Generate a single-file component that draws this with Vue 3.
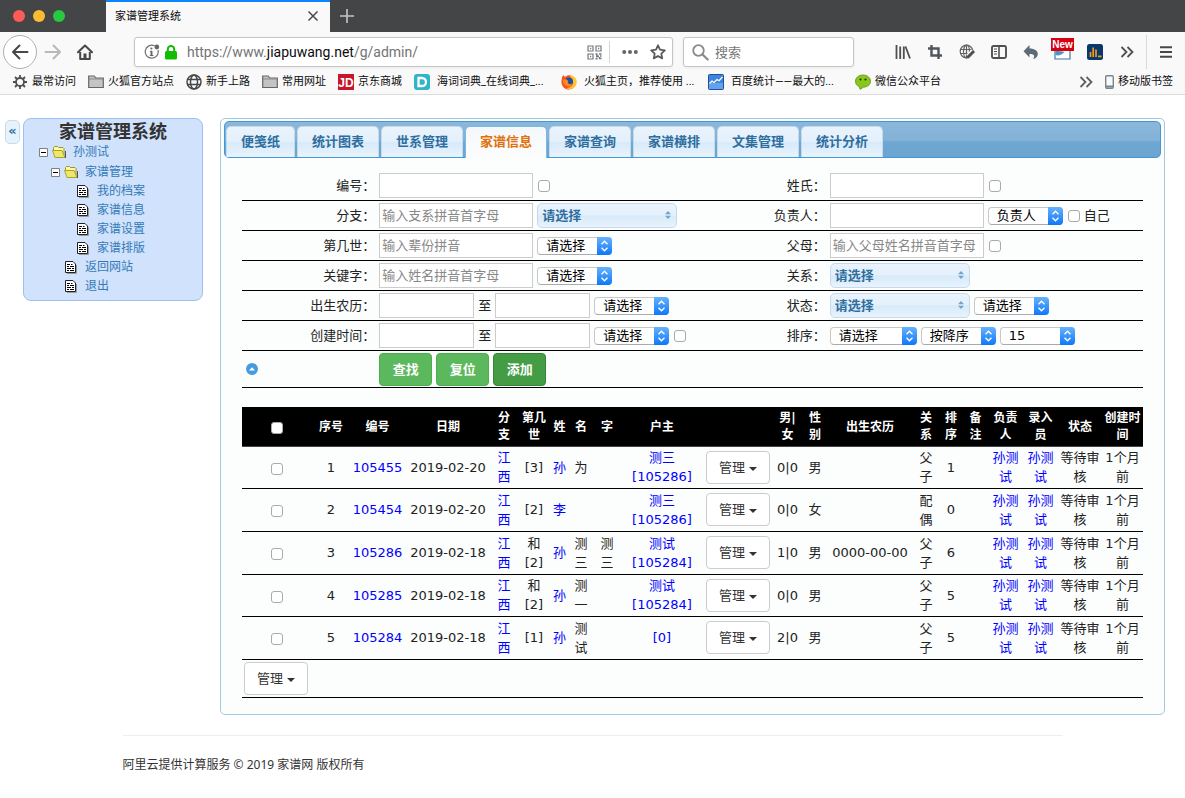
<script setup>
const bookmarks = [
  { icon: 'gear', text: '最常访问' },
  { icon: 'folder', text: '火狐官方站点' },
  { icon: 'globe', text: '新手上路' },
  { icon: 'folder', text: '常用网址' },
  { icon: 'jd', text: '京东商城' },
  { icon: 'dict', text: '海词词典_在线词典_...', wide: true },
  { icon: 'firefox', text: '火狐主页，推荐使用 ...', wide: true },
  { icon: 'stats', text: '百度统计——最大的...', wide: true },
  { icon: 'wechat', text: '微信公众平台' }
]

const tree = [
  { text: '孙测试', kind: 'folder', level: 0 },
  { text: '家谱管理', kind: 'folder', level: 1 },
  { text: '我的档案', kind: 'leaf', level: 3 },
  { text: '家谱信息', kind: 'leaf', level: 3 },
  { text: '家谱设置', kind: 'leaf', level: 3 },
  { text: '家谱排版', kind: 'leaf', level: 3 },
  { text: '返回网站', kind: 'leaf', level: 2 },
  { text: '退出', kind: 'leaf', level: 2 }
]

const tabs = ['便笺纸', '统计图表', '世系管理', '家谱信息', '家谱查询', '家谱横排', '文集管理', '统计分析']

const text = (w = 154, ph = '') => ({ t: 'text', w, ph })
const check = { t: 'check' }
const menu = { t: 'menu', w: 140, value: '请选择' }
const pick = (value = '请选择', w = 75) => ({ t: 'pick', w, value })
const word = value => ({ t: 'word', value })

const fields = [
  { label: '编号', items: [text(), check] },
  { label: '姓氏', items: [text(), check] },
  { label: '分支', items: [text(154, '输入支系拼音首字母'), menu] },
  { label: '负责人', items: [text(), pick('负责人'), check, word('自己')] },
  { label: '第几世', items: [text(154, '输入辈份拼音'), pick()] },
  { label: '父母', items: [text(154, '输入父母姓名拼音首字母'), check] },
  { label: '关键字', items: [text(154, '输入姓名拼音首字母'), pick()] },
  { label: '关系', items: [menu] },
  { label: '出生农历', items: [text(95), word('至'), text(95), pick()] },
  { label: '状态', items: [menu, pick()] },
  { label: '创建时间', items: [text(95), word('至'), text(95), pick(), check] },
  { label: '排序', items: [pick('请选择', 87), pick('按降序'), pick('15')] }
]

const columns = [
  ['', 70], ['序号', 38], ['编号', 55], ['日期', 86], ['分支', 26], ['第几世', 34], ['姓', 17],
  ['名', 26], ['字', 26], ['户主', 84], ['', 68], ['男|女', 31], ['性别', 24], ['出生农历', 86],
  ['关系', 26], ['排序', 24], ['备注', 25], ['负责人', 35], ['录入员', 35], ['状态', 44], ['创建时间', 41]
]

const people = [
  { n: 1, id: '105455', date: '2019-02-20', gen: '[3]', sur: '孙', name: '为', zi: '', head: '测三', hid: '[105286]', mf: '0|0', sex: '男', born: '', rel: '父子', sort: 1 },
  { n: 2, id: '105454', date: '2019-02-20', gen: '[2]', sur: '李', name: '', zi: '', head: '测三', hid: '[105286]', mf: '0|0', sex: '女', born: '', rel: '配偶', sort: 0 },
  { n: 3, id: '105286', date: '2019-02-18', gen: '和 [2]', sur: '孙', name: '测三', zi: '测三', head: '测试', hid: '[105284]', mf: '1|0', sex: '男', born: '0000-00-00', rel: '父子', sort: 6 },
  { n: 4, id: '105285', date: '2019-02-18', gen: '和 [2]', sur: '孙', name: '测一', zi: '', head: '测试', hid: '[105284]', mf: '0|0', sex: '男', born: '', rel: '父子', sort: 5 },
  { n: 5, id: '105284', date: '2019-02-18', gen: '[1]', sur: '孙', name: '测试', zi: '', head: '', hid: '[0]', mf: '2|0', sex: '男', born: '', rel: '父子', sort: 5 }
]
</script>

<template>
  <div class="window">
    <header class="chrome">
      <div class="titlebar">
        <div class="lights"><i class="red"></i><i class="yellow"></i><i class="green"></i></div>
        <div class="browser-tab">
          <span>家谱管理系统</span>
          <button class="plain" aria-label="关闭标签页">
            <svg width="12" height="12" viewBox="0 0 12 12"><path d="M1.5 1.5l9 9M10.5 1.5l-9 9" stroke="#4a4a4a" stroke-width="1.5" /></svg>
          </button>
        </div>
        <button class="plain new-tab" aria-label="新标签页">
          <svg width="14" height="14" viewBox="0 0 14 14"><path d="M7 0v14M0 7h14" stroke="#c6c6c7" stroke-width="1.6" /></svg>
        </button>
      </div>

      <div class="toolbar">
        <button class="back" aria-label="后退">
          <svg width="18" height="16" viewBox="0 0 18 16"><path d="M16.5 8H2M8.5 1.500L2 8l6.500 6.500" fill="none" stroke="#484848" stroke-width="2" stroke-linecap="round" stroke-linejoin="round" /></svg>
        </button>
        <button class="plain tool" aria-label="前进">
          <svg width="18" height="16" viewBox="0 0 18 16"><path d="M1.500 8H16M9.500 1.500L16 8l-6.500 6.500" fill="none" stroke="#b9b9b9" stroke-width="2" stroke-linecap="round" stroke-linejoin="round" /></svg>
        </button>
        <button class="plain tool" aria-label="主页">
          <svg width="16" height="16" viewBox="0 0 16 16"><path d="M1 8.300L8 1.500l7 6.800" fill="none" stroke="#484848" stroke-width="2" stroke-linecap="round" stroke-linejoin="round" /><path d="M3.200 8v7h9.600V8" fill="none" stroke="#484848" stroke-width="2" stroke-linejoin="round" /><path d="M6.500 9.500h3V15h-3z" fill="#484848" /></svg>
        </button>
        <div class="urlbar">
          <svg width="16" height="16" viewBox="0 0 16 16"><path d="M10.500 1.800A6.500 6.500 0 1 0 14 6" fill="none" stroke="#717171" stroke-width="1.200" /><path d="M7.500 7v4.500" fill="none" stroke="#666" stroke-width="1.900" /><path d="M6 7.300h2M5.800 11.500h3.600" stroke="#666" stroke-width="1" /><circle cx="7.400" cy="4.500" r="1.100" fill="#666" /><circle cx="12.800" cy="3" r="2.400" fill="#666" /></svg>
          <svg width="12" height="15" viewBox="0 0 12 15"><rect y="6" width="12" height="8.500" rx="1.500" fill="#12bc00" /><path d="M2.800 7V4.200a3.200 3.200 0 0 1 6.400 0V7" fill="none" stroke="#12bc00" stroke-width="2" /></svg>
          <span class="url">https://www.<b>jiapuwang.net</b>/g/admin/</span>
          <svg width="15" height="15" viewBox="0 0 15 15" fill="none" stroke="#73777f" stroke-width="1.200"><path d="M1 1h5v5H1zM9 1h5v5H9zM1 9h5v5H1z" /><path d="M3 3.500h1.200M11 3.500h1.200M3 11.500h1.200" stroke-width="1.600" /><path d="M8.500 9h2M12 9h2.500M9 11.200h3M13 11h1.500M8.500 13.800h2M12 13.600h2.500M10 9.500v3M12.500 12v2" stroke-width="1.500" /></svg>
          <i class="rule"></i>
          <svg width="16" height="6" viewBox="0 0 16 6" fill="#666"><circle cx="2.200" cy="3" r="2" /><circle cx="8" cy="3" r="2" /><circle cx="13.800" cy="3" r="2" /></svg>
          <svg width="16" height="16" viewBox="0 0 16 16"><path d="M8 1.300l2 4.400 4.800.600-3.500 3.300.900 4.800L8 12l-4.200 2.400.900-4.800L1.200 6.300 6 5.700z" fill="none" stroke="#5a5a5a" stroke-width="1.800" stroke-linejoin="round" /></svg>
        </div>
        <label class="search">
          <svg width="17" height="17" viewBox="0 0 17 17" fill="none" stroke="#8a8a8a"><circle cx="6.500" cy="6.500" r="5.300" stroke-width="1.800" /><path d="M10.500 10.500l5.200 5" stroke-width="2.200" stroke-linecap="round" /></svg>
          <input type="text" placeholder="搜索" aria-label="搜索" />
        </label>
        <div class="tools">
          <button class="plain tool" aria-label="书库"><svg width="16" height="16" viewBox="0 0 16 16" stroke="#505050" stroke-width="1.800"><path d="M1.500 1v14M5.200 2.500V15M8.800 2.500V15M10.500 2.500l4.500 12" /></svg></button>
          <button class="plain tool" aria-label="截图"><svg width="16" height="16" viewBox="0 0 16 16" fill="none" stroke="#4e555d" stroke-width="2.400"><path d="M4.500 1v10.500H15M1 4.500h10.500V15" /></svg></button>
          <button class="plain tool" aria-label="翻译"><svg width="17" height="16" viewBox="0 0 17 16" fill="none" stroke="#626262" stroke-width="1.200"><circle cx="7.500" cy="7.500" r="6.300" /><ellipse cx="7.500" cy="7.500" rx="3" ry="6.300" /><path d="M1.200 5.500h12.600M1.200 9.500h12.600M7.500 1v13" /><path d="M9 12.500l5.500-5.500" stroke="#f9f9fa" stroke-width="5" /><path d="M8.500 13.500l6.500-6.500" stroke="#505050" stroke-width="3" /></svg></button>
          <button class="plain tool" aria-label="侧栏"><svg width="16" height="14" viewBox="0 0 16 14" fill="none" stroke="#505050"><rect x="1" y="1" width="14" height="12" rx="1.500" stroke-width="1.900" /><path d="M8 1v12" stroke-width="1.600" /><path d="M3 4h3M3 6.500h3M3 9h3" stroke-width="1" /></svg></button>
          <button class="plain tool" aria-label="撤销"><svg width="16" height="16" viewBox="0 0 16 16"><path d="M6.500 1v3.400c5.200 0 8.800 2.400 8.300 6-.400 2.400-2.300 4-4.800 4.600 2.500-3 1-4.900-3.500-4.900v3.300L.5 7.200z" fill="#5c6b78" /></svg></button>
          <button class="plain tool badge" aria-label="消息"><svg width="18" height="16" viewBox="0 0 18 16"><path d="M1 2h15v13H1z" fill="#fff" stroke="#3f78a9" stroke-width="1.200" /><path d="M1.500 7c4 0 7 0 9 1-3 3-6 4-9 3z" fill="#4f93c6" /></svg><em>New</em></button>
          <button class="plain tool" aria-label="统计"><svg width="16" height="16" viewBox="0 0 16 16"><rect width="16" height="16" rx="2.500" fill="#07396d" /><path d="M3.500 13V8M6.200 13V3.500M9 13V5.500M11 12.300h3.500" stroke="#f29a1d" stroke-width="1.700" /></svg></button>
          <button class="plain tool" aria-label="更多工具"><svg width="14" height="12" viewBox="0 0 14 12"><path d="M1.500 1l5 5-5 5M7.500 1l5 5-5 5" fill="none" stroke="#505050" stroke-width="1.800" /></svg></button>
        </div>
        <i class="tall-rule"></i>
        <button class="plain tool" aria-label="菜单"><svg width="12" height="12" viewBox="0 0 12 12"><path d="M0 1.200h12M0 6h12M0 10.800h12" stroke="#484848" stroke-width="2" /></svg></button>
      </div>

      <nav class="bookmarks">
        <a v-for="b in bookmarks" :key="b.text" href="#" :class="{ wide: b.wide }">
          <svg v-if="b.icon === 'gear'" width="16" height="16" viewBox="0 0 16 16" fill="none" stroke="#505050"><circle cx="8" cy="8" r="4" stroke-width="1.800" /><path d="M8 1v3M8 12v3M1 8h3M12 8h3M3 3l2 2M11 11l2 2M13 3l-2 2M5 11l-2 2" stroke-width="1.800" /></svg>
          <svg v-else-if="b.icon === 'folder'" width="16" height="16" viewBox="0 0 16 16"><path d="M.7 13.500V2h5.500l1.500 2h7.600v9.500z" fill="#c4c4c4" stroke="#676767" stroke-width="1.200" /><path d="M1 5h14" stroke="#8a8a8a" /></svg>
          <svg v-else-if="b.icon === 'globe'" width="16" height="16" viewBox="0 0 16 16" fill="none" stroke="#474747" stroke-width="1.500"><circle cx="8" cy="8" r="7" /><ellipse cx="8" cy="8" rx="3.500" ry="7" /><path d="M1.500 5.500h13M1.500 10.500h13" /></svg>
          <svg v-else-if="b.icon === 'jd'" width="16" height="16" viewBox="0 0 16 16"><rect width="16" height="16" fill="#c8152a" /><text x="8" y="12.500" text-anchor="middle" font-family="Liberation Sans" font-size="12" font-weight="bold" fill="#fff">JD</text></svg>
          <svg v-else-if="b.icon === 'dict'" width="16" height="16" viewBox="0 0 16 16"><rect width="16" height="16" rx="3" fill="#2fb4c8" /><path d="M4.500 4h3.500a4 4 0 0 1 0 8H4.500z" fill="none" stroke="#fff" stroke-width="2.300" /></svg>
          <svg v-else-if="b.icon === 'firefox'" width="16" height="16" viewBox="0 0 16 16"><path d="M1 3c1-1 1-2 1-2l2 2c3-3 8-2 10 2 3 5-1 10.500-6 10.500S0 11 .5 7z" fill="#f5531f" /><path d="M9 1c6 1 8 6 6 10-2 4-7 5-10 3 4 0 7-2 7-6 0-3-3-3-3-7z" fill="#ffc52d" /><circle cx="8" cy="7.500" r="4" fill="#234ba8" /><path d="M2 6c2-1 4-1 5 1 1 1-1 1 0 2 1 2 4 1 4 0 0 3-3 4-5 3-3-1-4-3-4-6z" fill="#ff8a18" /></svg>
          <svg v-else-if="b.icon === 'stats'" width="16" height="16" viewBox="0 0 16 16"><rect x=".5" y=".5" width="15" height="15" rx="1" fill="#3e83dc" stroke="#1d4f9f" /><path d="M1 9h14v6H1z" fill="#64a2ea" /><path d="M1.500 9.500L4 7l2 1.500 3-3 2 1.200L14.500 3" fill="none" stroke="#fff" stroke-width="1.300" /></svg>
          <svg v-else width="16" height="16" viewBox="0 0 16 16"><path d="M8 1c4.500 0 7.500 2.800 7.500 6.300S12.500 13 8.500 13.200L5 15.300l-.800-2.700C1.500 11.500.5 9.500.5 7.300.5 3.800 3.500 1 8 1z" fill="#8ac71c" stroke="#5d8f0d" stroke-width=".800" /><circle cx="5.500" cy="5.500" r="1.100" fill="#20340a" /><circle cx="10.500" cy="5.500" r="1.100" fill="#20340a" /></svg>
          <span>{{ b.text }}</span>
        </a>
        <button class="plain overflow" aria-label="更多书签"><svg width="14" height="12" viewBox="0 0 14 12"><path d="M1.500 1l5 5-5 5M7.500 1l5 5-5 5" fill="none" stroke="#606060" stroke-width="1.800" /></svg></button>
        <a href="#" class="mobile">
          <svg width="9" height="14" viewBox="0 0 9 14"><rect x=".7" y=".7" width="7.600" height="12.600" rx="1.200" fill="#f9f9fa" stroke="#7c858d" stroke-width="1.400" /><path d="M1 11.500h7" stroke="#7c858d" stroke-width="2" /></svg>
          <span>移动版书签</span>
        </a>
      </nav>
    </header>

    <div class="page">
      <button class="collapse" aria-label="收起">«</button>

      <aside class="sidebar">
        <h1>家谱管理系统</h1>
        <ul>
          <li v-for="node in tree" :key="node.text + node.level" :class="[node.kind, 'level-' + node.level]">
            <template v-if="node.kind === 'folder'">
              <svg width="9" height="9" viewBox="0 0 9 9"><path d="M.5.5h8v8h-8z" fill="#fff" stroke="#808080" /><path d="M2 4.500h5" stroke="#000" /></svg>
              <svg width="14" height="14" viewBox="0 0 14 14"><path d="M1.500 5V2.500l1-1h3l1 1H11l1 1v8.500" fill="#fff7a8" stroke="#9a9420" /><path d="M.5 5.500h9.500l3 7H3z" fill="#eee66e" stroke="#aaa32a" /><path d="M13.500 6v7" stroke="#555" /></svg>
            </template>
            <svg v-else width="12" height="13" viewBox="0 0 12 13"><path d="M2 12.500h9.500V4" fill="none" stroke="#999" /><path d="M.5.500h7.500l2.500 2.500v8.500H.5z" fill="#fff" stroke="#222" /><path d="M2 3.500h3M6 3.500h1.500M2 5.500h2M5 5.500h4M2 7.500h4M7 7.500h2M2 9.500h2M5 9.500h4" stroke="#000" /></svg>
            <a href="#">{{ node.text }}</a>
          </li>
        </ul>
      </aside>

      <main class="panel">
        <nav class="tabs">
          <a v-for="t in tabs" :key="t" href="#" :class="{ active: t === '家谱信息' }">{{ t }}</a>
        </nav>

        <div class="content">
          <form @submit.prevent>
            <div class="fields">
              <div v-for="f in fields" :key="f.label" class="field">
                <label :for="'f-' + f.label">{{ f.label }}：</label>
                <div class="controls">
                  <template v-for="(it, i) in f.items" :key="i">
                    <input v-if="it.t === 'text'" :id="i ? null : 'f-' + f.label" type="text" :aria-label="f.label" :placeholder="it.ph" :style="{ width: it.w + 'px' }" />
                    <input v-else-if="it.t === 'check'" type="checkbox" :aria-label="f.label" />
                    <span v-else-if="it.t === 'word'">{{ it.value }}</span>
                    <span v-else :class="it.t" :style="{ width: it.w + 'px' }">
                      <select :id="i ? null : 'f-' + f.label" :aria-label="f.label"><option>{{ it.value }}</option></select>
                      <svg v-if="it.t === 'pick'" width="15" height="18" viewBox="0 0 15 18"><path d="M4.500 7.300l3-3 3 3M4.500 10.700l3 3 3-3" fill="none" stroke="#fff" stroke-width="1.400" /></svg>
                      <svg v-else width="6" height="8" viewBox="0 0 6 8" fill="#6fa5cd"><path d="M0 3.200L3 0l3 3.200zM0 4.800L3 8l3-3.200z" /></svg>
                    </span>
                  </template>
                </div>
              </div>
            </div>
            <div class="actions">
              <button type="button" class="plain fold" aria-label="收起条件"><svg width="12" height="12" viewBox="0 0 12 12"><circle cx="6" cy="6" r="6" fill="#469bdd" /><path d="M3 7.500l3-3.200 3 3.200z" fill="#fff" /></svg></button>
              <div class="buttons">
                <button type="submit">查找</button>
                <button type="reset">复位</button>
                <button type="button" class="dark">添加</button>
              </div>
            </div>
          </form>

          <table>
            <colgroup><col v-for="(c, i) in columns" :key="i" :style="{ width: c[1] + 'px' }" /></colgroup>
            <thead>
              <tr>
                <th v-for="(c, i) in columns" :key="i">
                  <input v-if="i === 0" type="checkbox" aria-label="全选" />{{ c[0] }}
                </th>
              </tr>
            </thead>
            <tbody>
              <tr v-for="p in people" :key="p.id">
                <td><input type="checkbox" :aria-label="'选择' + p.id" /></td>
                <td>{{ p.n }}</td>
                <td><a href="#">{{ p.id }}</a></td>
                <td class="nowrap">{{ p.date }}</td>
                <td><a href="#">江西</a></td>
                <td>{{ p.gen }}</td>
                <td class="tight"><a href="#">{{ p.sur }}</a></td>
                <td>{{ p.name }}</td>
                <td>{{ p.zi }}</td>
                <td><a href="#">{{ p.head }} {{ p.hid }}</a></td>
                <td><button class="manage">管理 <i></i></button></td>
                <td>{{ p.mf }}</td>
                <td>{{ p.sex }}</td>
                <td class="nowrap">{{ p.born }}</td>
                <td>{{ p.rel }}</td>
                <td>{{ p.sort }}</td>
                <td></td>
                <td><a href="#">孙测试</a></td>
                <td><a href="#">孙测试</a></td>
                <td>等待审核</td>
                <td>1个月前</td>
              </tr>
            </tbody>
            <tfoot>
              <tr><td colspan="21"><button class="manage">管理 <i></i></button></td></tr>
            </tfoot>
          </table>
        </div>
      </main>
    </div>

    <footer>阿里云提供计算服务 © 2019 家谱网 版权所有</footer>
  </div>
</template>

<style>
body {
  background: #fff;
}
</style>

<style scoped>
* {
  box-sizing: border-box;
}
.window {
  font: 13px/19px "DejaVu Sans", "Noto Sans CJK SC", sans-serif;
  color: #222;
}
a {
  text-decoration: none;
}
svg {
  display: block;
  flex: none;
}
button,
input,
select {
  font: inherit;
  margin: 0;
}
.plain {
  border: 0;
  padding: 0;
  background: none;
}

/* Browser chrome */
.chrome {
  background: #f9f9fa;
  border-bottom: 1px solid #dcdcdc;
  font-family: Roboto, "Noto Sans CJK SC", sans-serif;
}
.titlebar {
  display: flex;
  height: 32px;
  background: #444547;
}
.lights {
  display: flex;
  align-items: center;
  gap: 8px;
  width: 106px;
  padding-left: 13px;
}
.lights i {
  width: 12px;
  height: 12px;
  border-radius: 50%;
}
.red { background: #fc5b57; }
.yellow { background: #fdbc2f; }
.green { background: #28c840; }
.browser-tab {
  display: flex;
  align-items: center;
  justify-content: space-between;
  width: 224px;
  padding: 0 11px 2px 9px;
  border-top: 2px solid #0a84ff;
  background: #f9f9fa;
  color: #0c0c0d;
  font-size: 11px;
}
.new-tab {
  padding: 0 10px;
}
.toolbar {
  display: flex;
  align-items: center;
  height: 40px;
  padding: 0 3px;
}
.back {
  display: grid;
  place-items: center;
  width: 34px;
  height: 34px;
  padding: 0;
  border: 1px solid #b1b1b3;
  border-radius: 50%;
  background: #fff;
}
.tool {
  display: grid;
  place-items: center;
  width: 32px;
  height: 32px;
}
.urlbar,
.search {
  display: flex;
  align-items: center;
  height: 30px;
  border: 1px solid #c4c4c5;
  border-radius: 3px;
  background: #fff;
  box-shadow: 0 1px 3px rgba(0, 0, 0, .06);
}
.urlbar {
  flex: 1;
  gap: 5px;
  margin-left: 33px;
  padding: 0 6px 0 9px;
}
.url {
  flex: 1;
  padding-left: 5px;
  color: #737373;
  font-size: 14px;
}
.url b {
  color: #0c0c0d;
  font-weight: 400;
}
.rule {
  width: 1px;
  height: 22px;
  margin: 0 7px 0 2px;
  background: #d4d4d5;
}
.urlbar svg:last-child {
  margin-left: 7px;
}
.search {
  gap: 6px;
  width: 171px;
  margin: 0 33px 0 10px;
  padding-left: 8px;
}
.search input {
  width: 100%;
  border: 0;
  padding: 0;
  background: none;
}
.search input::placeholder {
  color: #777;
}
.tools {
  display: flex;
}
.tall-rule {
  width: 1px;
  height: 34px;
  margin: 0 3px;
  background: #d9d9da;
}
.badge {
  position: relative;
}
.badge em {
  position: absolute;
  top: 2px;
  left: 4px;
  width: 23px;
  background: #d70012;
  color: #fff;
  font: bold 10px/13px "Liberation Sans", sans-serif;
}
.bookmarks {
  display: flex;
  align-items: center;
  gap: 12px;
  height: 22px;
  padding: 0 12px 2px;
  font-size: 11px;
  line-height: 16px;
  white-space: nowrap;
}
.bookmarks a {
  display: flex;
  align-items: center;
  gap: 4px;
  color: #0c0c0d;
}
.bookmarks .wide {
  width: 135px;
  gap: 7px;
}
.overflow {
  margin-left: auto;
}

/* Page */
.page {
  display: flex;
  align-items: flex-start;
  padding: 23px 20px 20px 5px;
}
.collapse {
  width: 15px;
  height: 24px;
  margin: 2px 3px 0 0;
  padding: 0 0 3px;
  border: 1px solid #c5dbec;
  border-radius: 5px;
  background: #e6f2fc;
  color: #2e6e9e;
  font-weight: bold;
}
.sidebar {
  width: 180px;
  margin-right: 17px;
  padding: 3px 0 4px;
  border: 1px solid #9dc0f0;
  border-radius: 8px;
  background: #d0e2fc;
}
h1 {
  margin: 0;
  color: #333;
  font-size: 18px;
  line-height: 20px;
  text-align: center;
}
ul {
  margin: 0;
  padding: 0;
  list-style: none;
}
li {
  display: flex;
  align-items: center;
  height: 19px;
  font-size: 12px;
}
li.folder {
  height: 20px;
  gap: 4px;
}
li a {
  padding-left: 8px;
  color: #337ab7;
}
li.folder a {
  padding-left: 3px;
}
.level-0 { padding-left: 15px; }
.level-1 { padding-left: 27px; }
.level-2 { padding-left: 41px; }
.level-3 { padding-left: 53px; }

.panel {
  flex: 1;
  min-width: 0;
  padding: 2px 3px;
  border: 1px solid #a6c9e2;
  border-radius: 5px;
  background: #fcfdfd;
}
.tabs {
  display: flex;
  gap: 2px;
  height: 37px;
  padding: 4px 1px 0;
  border: 1px solid #4297d7;
  border-radius: 5px;
  background: linear-gradient(#8cb7db, #82b1d7 54%, #6fa7d2 56%, #6ca5d1);
}
.tabs a {
  height: 31px;
  padding: 0 14px;
  border: 1px solid #c5dbec;
  border-bottom: 0;
  border-radius: 5px 5px 0 0;
  background: linear-gradient(#e9f3fd, #e4f0fb 48%, #d8eafa 52%, #e8f3fd);
  color: #2e6e9e;
  font-weight: bold;
  line-height: 30px;
  white-space: nowrap;
}
.tabs .active {
  height: 32px;
  border-color: #79b7e7;
  background: linear-gradient(#f4f8fa, #fcfdfd);
  color: #e17009;
}
.content {
  padding: 13px 18px 14px;
}
.fields {
  display: grid;
  grid-template-columns: 1fr 1fr;
}
.field {
  display: grid;
  grid-template-columns: 3fr 7fr;
  align-items: center;
  height: 30px;
  border-bottom: 1px solid #000;
}
.field label {
  padding-right: 2px;
  text-align: right;
}
.controls,
.buttons {
  display: flex;
  align-items: center;
  gap: 4px;
  padding-left: 2px;
}
input[type="text"] {
  color: #222;
}
.controls input[type="text"] {
  height: 25px;
  padding: 0 2px;
  border: 1px solid #ccc;
  background: #fff;
}
.controls input::placeholder {
  color: #888;
}
input[type="checkbox"] {
  appearance: none;
  width: 12px;
  height: 12px;
  border: 1px solid #aaa;
  border-radius: 3px;
  background: #fff;
  vertical-align: -3px;
}
.controls input[type="checkbox"] {
  margin-left: 1px;
}
.menu,
.pick {
  position: relative;
  display: block;
}
.menu svg,
.pick svg {
  position: absolute;
  pointer-events: none;
}
select {
  display: block;
  appearance: none;
  width: 100%;
}
.menu select {
  height: 25px;
  padding: 0 4px;
  border: 1px solid #c5dbec;
  border-radius: 5px;
  background: linear-gradient(#e9f3fd, #e4f0fb 48%, #d8eafa 52%, #e8f3fd);
  color: #2e6e9e;
  font-weight: bold;
}
.menu svg {
  top: 8px;
  right: 6px;
}
.pick select {
  height: 18px;
  padding: 0 8px;
  border: 1px solid #c8c8c8;
  border-bottom-color: #aaa;
  border-radius: 4px;
  background: #fff;
  color: #000;
  line-height: 16px;
}
.pick svg {
  top: 0;
  right: 0;
  border-radius: 0 4px 4px 0;
  background: linear-gradient(#68b2fb, #0d78fb);
}
.actions {
  display: grid;
  grid-template-columns: 3fr 17fr;
  align-items: center;
  height: 37px;
  border-bottom: 1px solid #000;
}
.fold {
  justify-self: start;
  padding-left: 4px;
}
.buttons button {
  min-width: 53px;
  height: 33px;
  padding: 0 12px;
  border: 1px solid #4cae4c;
  border-radius: 4px;
  background: #5cb85c;
  color: #fff;
  font-weight: bold;
}
.buttons .dark {
  border-color: #398439;
  background: #449d44;
}

table {
  width: 100%;
  margin-top: 19px;
  border-collapse: collapse;
  border-spacing: 0;
  table-layout: fixed;
}
th {
  height: 39px;
  padding: 2px 2px 0;
  background: #000;
  color: #fff;
  font-size: 12px;
  line-height: 17px;
  border-bottom: 1px solid #444;
}
td {
  height: 43px;
  padding: 1px 2px;
  border-bottom: 1px solid #000;
  text-align: center;
}
tbody tr:nth-child(3n + 1) td {
  height: 42px;
}
td a {
  color: #00f;
}
.nowrap {
  white-space: nowrap;
}
td.tight {
  padding: 0;
}
.manage {
  height: 33px;
  padding: 0 12px;
  border: 1px solid #ccc;
  border-radius: 4px;
  background: #fff;
  color: #333;
  white-space: nowrap;
}
.manage i {
  display: inline-block;
  border: 4px solid transparent;
  border-top-color: #333;
  border-bottom: 0;
  vertical-align: 1px;
}
tfoot td {
  height: 38px;
  text-align: left;
}
footer {
  max-width: 940px;
  margin: 0 auto;
  padding-top: 19px;
  border-top: 1px solid #eee;
  color: #333;
  font: 12px/20px "Noto Sans", "Noto Sans CJK SC", sans-serif;
}
</style>
